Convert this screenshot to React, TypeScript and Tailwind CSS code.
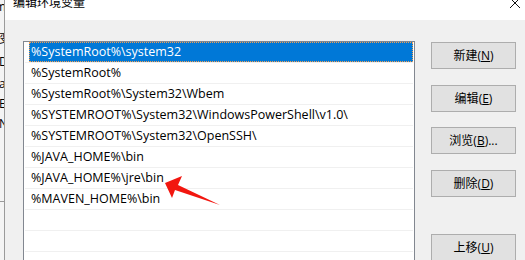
import React from 'react';

const paths = [
  '%SystemRoot%\\system32',
  '%SystemRoot%',
  '%SystemRoot%\\System32\\Wbem',
  '%SYSTEMROOT%\\System32\\WindowsPowerShell\\v1.0\\',
  '%SYSTEMROOT%\\System32\\OpenSSH\\',
  '%JAVA_HOME%\\bin',
  '%JAVA_HOME%\\jre\\bin',
  '%MAVEN_HOME%\\bin',
  '',
  '',
  '',
];

const buttons = [
  { label: '新建', key: 'N', tail: ')', mt: 'mt-[1px]' },
  { label: '编辑', key: 'E', tail: ')', mt: 'mt-[16px]' },
  { label: '浏览', key: 'B', tail: ')...', mt: 'mt-[15px]' },
  { label: '删除', key: 'D', tail: ')', mt: 'mt-[16px]' },
  { label: '上移', key: 'U', tail: ')', mt: 'mt-[37px]' },
];

const font = "font-['Open_Sans','Noto_Sans_CJK_SC',sans-serif]";

export default function App() {
  return (
    <div className={`relative flex w-[525px] h-[260px] overflow-hidden bg-white text-[12px] text-black ${font}`}>
      {/* background window edge */}
      <div className="w-[5px] shrink-0 flex flex-col overflow-hidden bg-[#f4f4f4] border-r border-[#9a9a9a] leading-[12px]">
        <div className="mt-[1px] -ml-[5px] whitespace-nowrap">m</div>
        <div className="mt-[20px] -ml-[1px] whitespace-nowrap">变</div>
        <div className="mt-[11px] -ml-[1px] whitespace-nowrap">D</div>
        <div className="mt-[10px] -ml-[1px] whitespace-nowrap">a</div>
        <div className="mt-[8px] -ml-[1px] whitespace-nowrap">E</div>
        <div className="mt-[8px] -ml-[1px] whitespace-nowrap">N</div>
        <div className="mt-[71px] h-px bg-[#9a9a9a]" />
      </div>

      <div className="flex-1 flex flex-col">
        {/* title bar */}
        <div className="h-[20px] shrink-0 flex items-start justify-between bg-white">
          <div className="ml-[8px] -mt-[5px] leading-[16px]">编辑环境变量</div>
          <svg width="12" height="12" viewBox="0 0 12 12" className="mr-[4px] -mt-[3px]">
            <path d="M1 1L11 11M11 1L1 11" stroke="#111" strokeWidth="1" />
          </svg>
        </div>

        {/* body */}
        <div className="flex-1 flex bg-[#f0f0f0] pt-[21px] pl-[18px]">
          <div className="w-[392px] shrink-0 border border-[#828790] bg-white flex flex-col text-[12.5px]">
            {paths.map((p, i) => (
              <div key={i} className="h-[21px] shrink-0 mx-px border-b border-[#f0f0f0] flex">
                {i === 0 ? (
                  <div className="ml-[4px] flex-1 h-[20px] bg-[#0078d7] text-white border border-dotted border-[#f5a050] px-px leading-[18px] whitespace-nowrap">
                    {p}
                  </div>
                ) : (
                  <div className="ml-[6px] leading-[20px] whitespace-nowrap">{p}</div>
                )}
              </div>
            ))}
          </div>

          <div className="ml-[16px] w-[85px] flex flex-col">
            {buttons.map((b) => (
              <div
                key={b.key}
                className={`${b.mt} h-[27px] shrink-0 flex items-center justify-center bg-[#e1e1e1] border border-[#adadad] whitespace-nowrap`}
              >
                {b.label}(<span className="underline">{b.key}</span>{b.tail}
              </div>
            ))}
          </div>
        </div>
      </div>

      {/* red annotation arrow */}
      <svg className="absolute left-0 top-0 pointer-events-none" width="525" height="260">
        <polygon points="165,183 182,176 178,185 220,205 175,190 172,198" fill="#f2160f" />
      </svg>
    </div>
  );
}
